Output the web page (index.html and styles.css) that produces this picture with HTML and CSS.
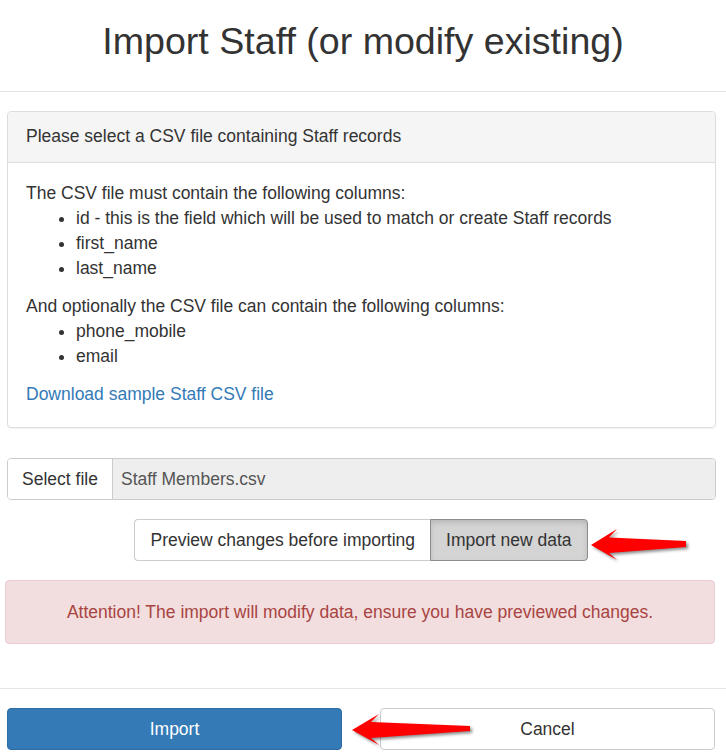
FILE: index.html
```html
<!DOCTYPE html>
<html>
<head>
<meta charset="utf-8">
<link rel="stylesheet" href="styles.css">
</head>
<body>
<div class="modal">
  <div class="modal-header">
    <h1 class="title">Import Staff (or modify existing)</h1>
  </div>
  <div class="modal-body">
    <div class="panel">
      <div class="panel-heading">Please select a CSV file containing Staff records</div>
      <div class="panel-body">
        <p>The CSV file must contain the following columns:</p>
        <ul>
          <li>id - this is the field which will be used to match or create Staff records</li>
          <li>first_name</li>
          <li>last_name</li>
        </ul>
        <p class="gap">And optionally the CSV file can contain the following columns:</p>
        <ul>
          <li>phone_mobile</li>
          <li>email</li>
        </ul>
        <a class="link gap" href="#">Download sample Staff CSV file</a>
      </div>
    </div>
    <div class="input-group">
      <span class="btn-file">Select file</span>
      <span class="file-name">Staff Members.csv</span>
    </div>
    <div class="group-row">
      <div class="btn-group">
        <span class="seg">Preview changes before importing</span>
        <span class="seg active">Import new data</span>
      </div>
      <svg class="arrow arrow-1" width="110" height="46" viewBox="583 522 110 46">
        <polygon points="593,545 619,529 611,537.5 688,541 688,547 611,553 619,560"/>
      </svg>
    </div>
    <div class="alert">Attention! The import will modify data, ensure you have previewed changes.</div>
  </div>
  <div class="modal-footer">
    <span class="btn primary">Import</span>
    <span class="btn default">Cancel</span>
    <svg class="arrow arrow-2" width="130" height="46" viewBox="345 708 130 46">
      <polygon points="352,729 379,713 371,721 470,725 470,730 371,737 379,744"/>
    </svg>
  </div>
</div>
</body>
</html>
```
FILE: styles.css
```css
* { box-sizing: border-box; }
html, body { margin: 0; padding: 0; background: #fff; }
body {
  font-family: "Liberation Sans", Arial, sans-serif;
  font-size: 17.5px;
  line-height: 25px;
  color: #333;
  width: 726px;
  height: 755px;
  overflow: hidden;
}
.modal-header {
  height: 92px;
  border-bottom: 1px solid #e5e5e5;
  display: flex;
  align-items: center;
  justify-content: center;
}
.title {
  margin: 0;
  font-weight: normal;
  font-size: 37.6px;
  line-height: 44px;
  color: #333;
  padding-bottom: 10px;
}
.modal-body {
  padding: 19px 10px 0 7px;
}
.panel {
  border: 1px solid #ddd;
  border-radius: 4px;
  box-shadow: 0 1px 1px rgba(0,0,0,0.05);
}
.panel-heading {
  background: #f5f5f5;
  border-bottom: 1px solid #ddd;
  border-radius: 3px 3px 0 0;
  padding: 12px 18px 13px;
}
.panel-body {
  padding: 18px 18px 20px;
}
.panel-body p { margin: 0; }
.panel-body ul { margin: 0; padding-left: 50px; }
.gap { margin-top: 13px !important; }
.link { display: block; color: #337ab7; text-decoration: none; margin-top: 12px; }
.input-group {
  margin-top: 30px;
  display: flex;
  height: 42px;
  border: 1px solid #ccc;
  border-radius: 4px;
  overflow: hidden;
}
.btn-file {
  width: 105px;
  display: flex;
  align-items: center;
  justify-content: center;
  background: #fff;
  border-right: 1px solid #ccc;
}
.file-name {
  flex: 1;
  background: #eee;
  display: flex;
  align-items: center;
  padding-left: 8px;
  color: #555;
}
.group-row {
  position: relative;
  margin-top: 19px;
  display: flex;
  justify-content: center;
}
.btn-group {
  display: flex;
  height: 42px;
  margin-left: -1px;
}
.seg {
  display: flex;
  align-items: center;
  padding: 0 15px;
  border: 1px solid #ccc;
  background: #fff;
}
.seg:first-child { border-radius: 4px 0 0 4px; border-right: none; }
.seg.active {
  background: #d4d4d4;
  border-color: #8c8c8c;
  border-radius: 0 4px 4px 0;
  box-shadow: inset 0 3px 5px rgba(0,0,0,0.125);
}
.arrow {
  position: absolute;
  overflow: visible;
}
.arrow polygon {
  fill: #ff0000;
  filter: drop-shadow(2px 2px 1.5px rgba(0,0,0,0.45));
}
.arrow-1 { left: 574px; top: 3px; }
.alert {
  margin: 19px 1px 0 -2px;
  height: 64px;
  background: #f2dede;
  border: 1px solid #ebccd1;
  border-radius: 4px;
  color: #a94442;
  display: flex;
  align-items: center;
  justify-content: center;
}
.modal-footer {
  position: relative;
  margin-top: 44px;
  border-top: 1px solid #e5e5e5;
  padding: 19px 10px 0 7px;
  display: grid;
  grid-template-columns: 335px 335px;
  column-gap: 38px;
}
.btn {
  height: 42px;
  display: flex;
  align-items: center;
  justify-content: center;
  border-radius: 4px;
  border: 1px solid #ccc;
}
.btn.primary { background: #337ab7; border-color: #2e6da4; color: #fff; }
.btn.default { background: #fff; color: #333; }
.arrow-2 { left: 345px; top: 20px; }
```
